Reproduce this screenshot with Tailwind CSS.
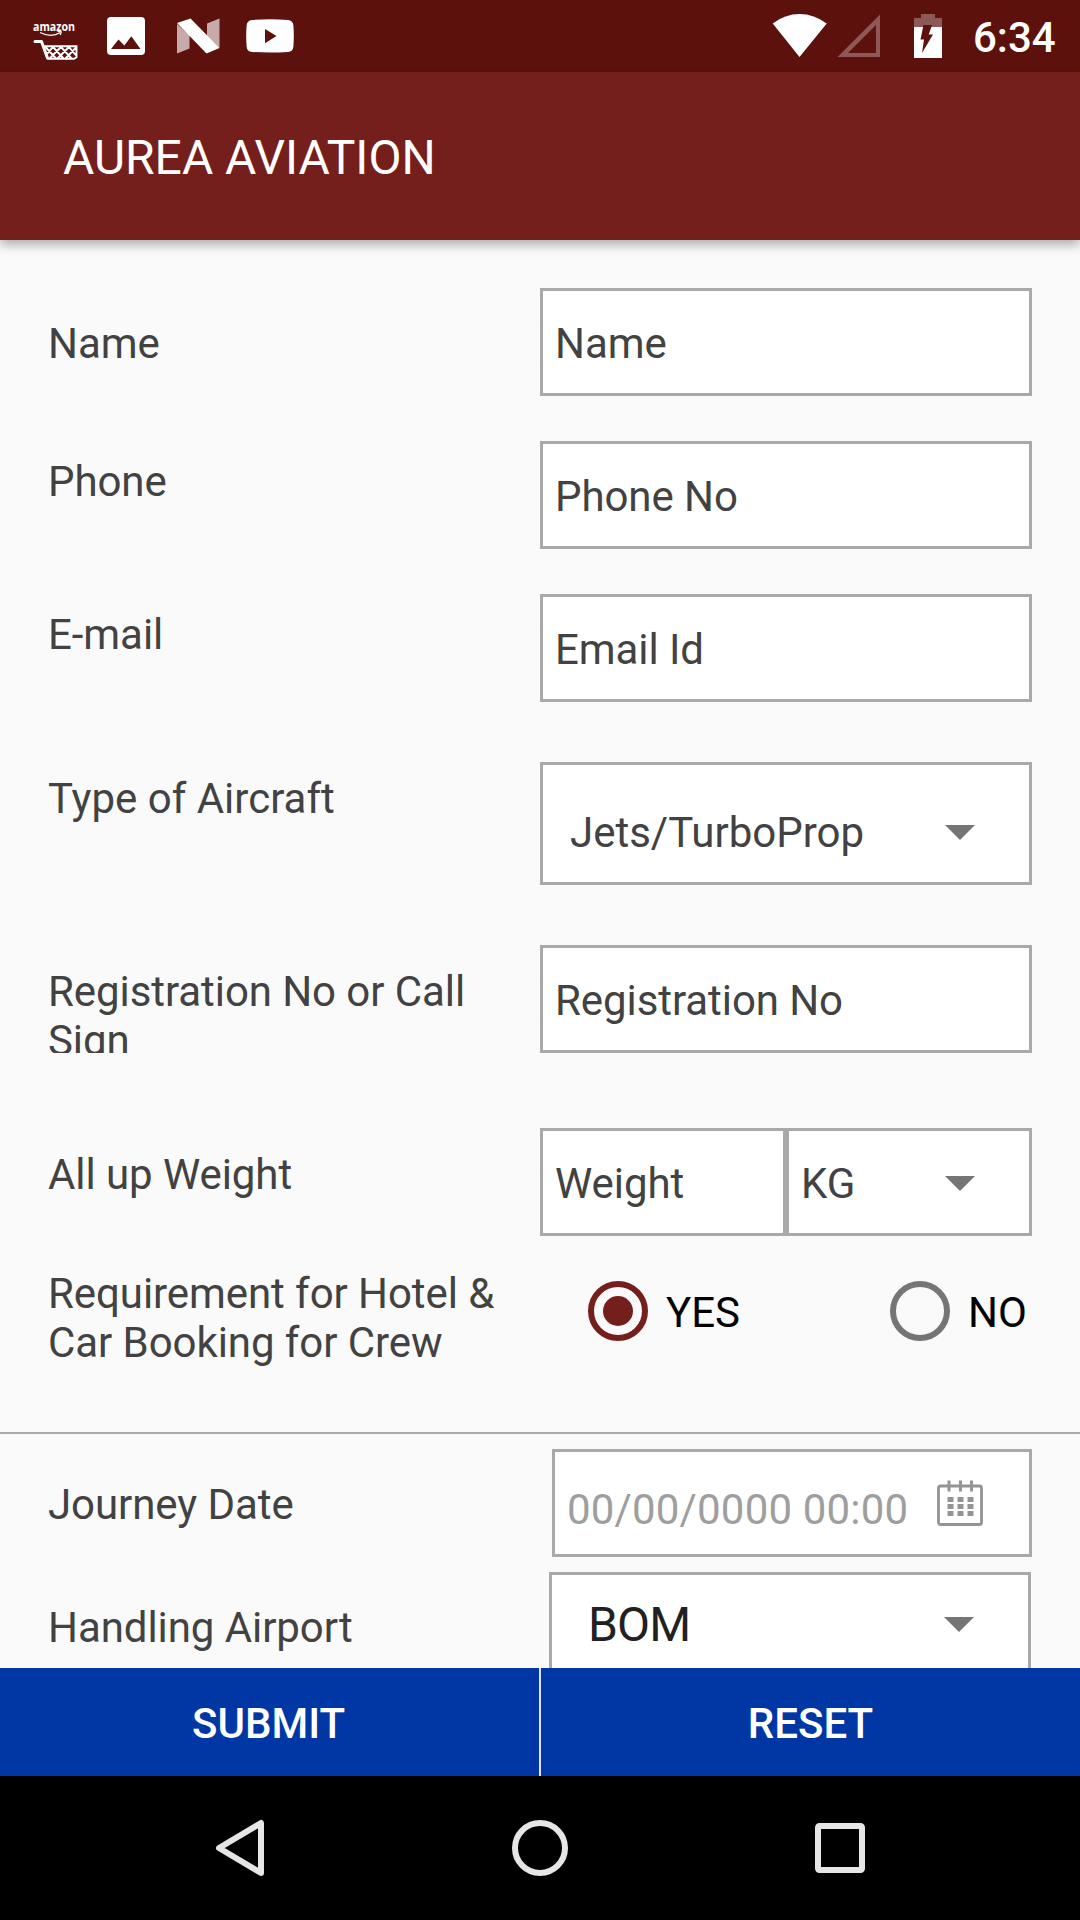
<!DOCTYPE html>
<html lang="en">
<head>
    <meta charset="UTF-8">
    <meta name="viewport" content="width=device-width, initial-scale=1.0">
    <title>Aurea Aviation</title>
    <script src="https://cdn.jsdelivr.net/npm/@tailwindcss/browser@4"></script>
</head>
<body class="w-[1080px] h-[1920px] overflow-hidden flex flex-col bg-[#fafafa] font-['Roboto',sans-serif] text-[42px] leading-[49px] text-[#424242]">

    <!-- Status bar -->
    <div class="h-[72px] shrink-0 bg-[#5c110d] text-white flex justify-between">
        <div class="flex">
            <svg class="w-[360px] h-[72px]" viewBox="0 0 360 72" fill="#fff">
                <!-- Amazon cart -->
                <text x="33" y="31" font-family="Open Sans" font-weight="700" font-size="11.5" textLength="42" lengthAdjust="spacingAndGlyphs">amazon</text>
                <path d="M40 32.5q11 5.5 20 .3M57.500 31.500l3.800.3-1 3.300" fill="none" stroke="#fff" stroke-width="1.200"/>
                <path d="M35 41.500h6.500l6 16.500" fill="none" stroke="#fff" stroke-width="3" stroke-linecap="round" stroke-linejoin="round"/>
                <path d="M44 46.200h32.500v11l-2.500 1.500H47.500M45.500 47l11 12M53 47l11 12M61 47l11 12M69 47l7.500 9M53 47l-7 8M61 47L49 59M69 47L57 59M76.500 47L65 59" fill="none" stroke="#fff" stroke-width="1.900"/>
                <!-- Picture -->
                <path fill-rule="evenodd" d="M111 17h30a4 4 0 0 1 4 4v30a4 4 0 0 1-4 4h-30a4 4 0 0 1-4-4V21a4 4 0 0 1 4-4zM111 49h29.500L131.300 36.300l-6.900 9.100-5.900-6z"/>
                <!-- Android N -->
                <path fill-opacity=".65" d="M177 24l12.500 11.500V48.500L177 53.500zM207 23.500L219.500 18.500V48L207 36z"/>
                <path d="M177 23l13.500-4.500L219.500 48 206.500 53.500z"/>
                <!-- YouTube -->
                <path fill-rule="evenodd" d="M252 20q18-1.500 36 0 5 .5 5.400 5.500.8 10.500 0 21-.4 5-5.400 5.500-18 1-36 0-5-.5-5.400-5.500-.8-10.500 0-21 .4-5 5.400-5.500zM265 29v14.200l11.500-7.100z"/>
            </svg>
        </div>
        <div class="flex">
            <svg class="w-[233px] h-[72px]" viewBox="740 0 233 72">
                <path fill="#fff" d="M799.500 57L772.700 23.500Q785 14 799.500 14t27.200 9.500z"/>
                <path fill="#fff" fill-opacity=".3" fill-rule="evenodd" d="M837.500 57L880 14.500V57zM848 53h28V25z"/>
                <path fill="#fff" fill-opacity=".3" d="M914 27v-9h7v-4h14v4h7v9z"/>
                <path fill="#fff" d="M914 27h28v31h-28z"/>
                <path fill="#5c110d" d="M923.500 25h8.500l-3.300 9.500h4.300l-11 18.500 2-13.500h-3.500z"/>
            </svg>
            <span class="w-[107px] mt-[13px] font-medium">6:34</span>
        </div>
    </div>

    <!-- App bar -->
    <header class="relative z-10 h-[168px] shrink-0 bg-[#751f1d] shadow-[0_5px_10px_rgba(0,0,0,0.3)] pl-[63px] pt-[58px] text-white text-[48px] leading-[56px]">
        AUREA AVIATION
    </header>

    <!-- Booking form -->
    <form id="bookingForm" class="flex-1 min-h-0 overflow-hidden flex flex-col pt-12 tracking-[-0.07px]">
        <div class="flex shrink-0 h-[108px] mb-[45px] pl-12">
            <label for="name" class="w-[492px] pt-[31px]">Name</label>
            <input type="text" id="name" placeholder="Name"
                class="w-[492px] h-[108px] bg-white border-3 border-[#a9a9a9] pl-3 pt-[27px] pb-6 placeholder:text-[#424242]">
        </div>
        <div class="flex shrink-0 h-[108px] mb-[45px] pl-12">
            <label for="phone" class="w-[492px] pt-4">Phone</label>
            <input type="text" id="phone" placeholder="Phone No"
                class="w-[492px] h-[108px] bg-white border-3 border-[#a9a9a9] pl-3 pt-[27px] pb-6 placeholder:text-[#424242]">
        </div>
        <div class="flex shrink-0 h-[108px] mb-[60px] pl-12">
            <label for="email" class="w-[492px] pt-4">E-mail</label>
            <input type="text" id="email" placeholder="Email Id"
                class="w-[492px] h-[108px] bg-white border-3 border-[#a9a9a9] pl-3 pt-[27px] pb-6 placeholder:text-[#424242]">
        </div>
        <div class="flex shrink-0 h-[123px] mb-[60px] pl-12">
            <span class="w-[492px] pt-3 tracking-normal">Type of Aircraft</span>
            <div class="w-[492px] bg-white border-3 border-[#a9a9a9] pl-[27px] pr-[54px] pt-[43px] flex items-start justify-between">
                <span class="tracking-normal">Jets/TurboProp</span>
                <svg class="w-[30px] h-[15px] mt-[17px]" viewBox="0 0 30 15"><path fill="#757575" d="M0 0h30L15 15z"/></svg>
            </div>
        </div>
        <div class="flex shrink-0 h-[108px] mb-[75px] pl-12">
            <label for="registration" class="w-[492px] h-[108px] overflow-hidden pt-[22px]">Registration No or Call Sign</label>
            <input type="text" id="registration" placeholder="Registration No"
                class="w-[492px] h-[108px] bg-white border-3 border-[#a9a9a9] pl-3 pt-[27px] pb-6 placeholder:text-[#424242]">
        </div>
        <div class="flex shrink-0 h-[108px] pl-12">
            <label for="weight" class="w-[492px] pt-[22px]">All up Weight</label>
            <input type="text" id="weight" placeholder="Weight"
                class="w-[246px] h-[108px] bg-white border-3 border-[#a9a9a9] pl-3 pt-[27px] pb-6 placeholder:text-[#424242]">
            <div class="w-[246px] bg-white border-3 border-[#a9a9a9] pl-3 pr-[54px] pt-7 flex items-start justify-between">
                <span>KG</span>
                <svg class="w-[30px] h-[15px] mt-[17px]" viewBox="0 0 30 15"><path fill="#757575" d="M0 0h30L15 15z"/></svg>
            </div>
        </div>
        <div class="flex shrink-0 h-[196px] pl-12">
            <span class="w-[492px] pt-[33px]">Requirement for Hotel &amp; Car Booking for Crew</span>
            <div class="flex items-start pt-[45px] pl-12 text-black">
                <div class="w-[302px] flex gap-[18px]">
                    <svg class="w-[60px] h-[60px]" viewBox="0 0 60 60">
                        <circle cx="30" cy="30" r="27" fill="none" stroke="#751f1d" stroke-width="6"/>
                        <circle cx="30" cy="30" r="15" fill="#751f1d"/>
                    </svg>
                    <span class="mt-[7px]">YES</span>
                </div>
                <div class="flex gap-[18px]">
                    <svg class="w-[60px] h-[60px]" viewBox="0 0 60 60">
                        <circle cx="30" cy="30" r="27" fill="none" stroke="#757575" stroke-width="6"/>
                    </svg>
                    <span class="mt-[7px]">NO</span>
                </div>
            </div>
        </div>
        <div class="shrink-0 h-0.5 bg-[#a9a9a9] mb-[15px]"></div>
        <div class="flex shrink-0 h-[108px] mb-[15px] pl-12">
            <span class="w-[504px] pt-[31px]">Journey Date</span>
            <div class="w-[480px] bg-white border-3 border-[#a9a9a9] pl-3 pr-[46px] flex items-start justify-between">
                <span class="mt-[33px] text-[#9e9e9e] tracking-[0.17px]">00/00/0000 00:00</span>
                <svg class="w-[46px] h-[46px] mt-7" viewBox="0 0 46 46" fill="none" stroke="#949494">
                    <rect x="1.500" y="6" width="43" height="38.500" rx="2" stroke-width="2.800"/>
                    <path d="M12 .5v11M23.500 .5v11M34.500 .5v11" stroke-width="3"/>
                    <path d="M10.500 19.500h26M10.500 26.500h26M10.500 33.500h26" stroke-width="4.800" stroke-dasharray="6 4"/>
                </svg>
            </div>
        </div>
        <div class="flex shrink-0 h-[108px] pl-12">
            <span class="w-[501px] pt-[31px]">Handling Airport</span>
            <div class="w-[482px] bg-white border-3 border-[#a9a9a9] pl-9 pr-[54px] flex items-start justify-between">
                <span class="mt-[22px] text-[48px] leading-[56px] tracking-[-0.8px] text-[#212121]">BOM</span>
                <svg class="w-[30px] h-[15px] mt-[42px]" viewBox="0 0 30 15"><path fill="#757575" d="M0 0h30L15 15z"/></svg>
            </div>
        </div>
    </form>

    <!-- Actions -->
    <div class="h-[108px] shrink-0 flex bg-[#dfe5f3] gap-0.5 text-white font-medium">
        <button type="submit" form="bookingForm" class="w-[539px] bg-[#0037a4] pt-[3px] pr-0.5 font-medium">SUBMIT</button>
        <button type="reset" form="bookingForm" class="w-[539px] bg-[#0037a4] pt-[3px] font-medium">RESET</button>
    </div>

    <!-- Navigation bar -->
    <nav class="h-[144px] shrink-0 bg-black flex items-center justify-center gap-[240px]">
        <svg class="w-[60px] h-[60px]" viewBox="0 0 60 60" fill="none" stroke="#e6e6e6" stroke-width="6" stroke-linejoin="round"><path d="M51 5v50L9 30z"/></svg>
        <svg class="w-[60px] h-[60px]" viewBox="0 0 60 60" fill="none" stroke="#e6e6e6" stroke-width="6"><circle cx="30" cy="30" r="25"/></svg>
        <svg class="w-[60px] h-[60px]" viewBox="0 0 60 60" fill="none" stroke="#e6e6e6" stroke-width="6"><rect x="8" y="8" width="44" height="44" rx="1.500"/></svg>
    </nav>
</body>
</html>
